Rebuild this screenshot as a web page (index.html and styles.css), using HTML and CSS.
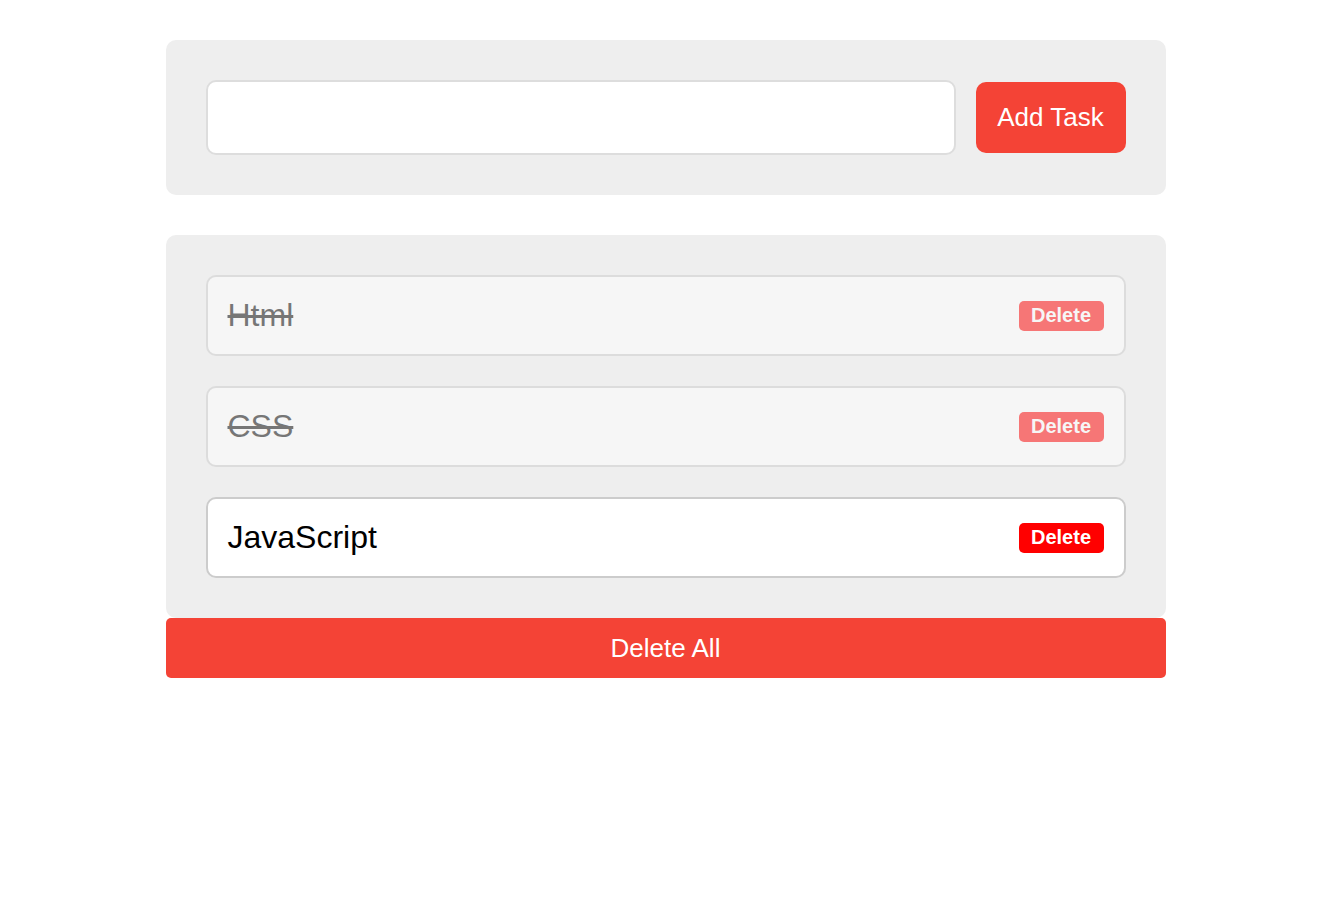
FILE: index.html
```html
<!DOCTYPE html>
<html>
<head>
<meta charset="utf-8">
<link rel="stylesheet" href="styles.css">
</head>
<body>
<div class="container">
  <div class="form card">
    <input class="task-input" type="text">
    <button class="add-btn">Add Task</button>
  </div>
  <div class="tasks card">
    <div class="task done"><span class="name">Html</span><button class="del">Delete</button></div>
    <div class="task done"><span class="name">CSS</span><button class="del">Delete</button></div>
    <div class="task"><span class="name">JavaScript</span><button class="del">Delete</button></div>
  </div>
  <button class="delete-all">Delete All</button>
</div>
</body>
</html>
```
FILE: styles.css
```css
* { box-sizing: border-box; }
body {
  margin: 0;
  background: #fff;
  font-family: "Liberation Sans", Arial, sans-serif;
}
.container {
  width: 1000px;
  margin: 40px auto 0;
}
.card {
  background: #eee;
  border-radius: 10px;
  padding: 40px;
}
.form {
  display: flex;
  align-items: center;
  gap: 20px;
  height: 155px;
}
.task-input {
  flex: 1;
  height: 75px;
  border: 2px solid #ddd;
  border-radius: 10px;
  background: #fff;
  outline: none;
  font-size: 26px;
  padding: 0 20px;
}
.add-btn {
  width: 150px;
  height: 71px;
  border: none;
  border-radius: 10px;
  background: #f44336;
  color: #fff;
  font-family: inherit;
  font-size: 26px;
  padding: 0;
}
.tasks {
  margin-top: 40px;
  display: flex;
  flex-direction: column;
  gap: 30px;
}
.task {
  height: 81px;
  background: #fff;
  border: 2px solid #ccc;
  border-radius: 10px;
  display: flex;
  align-items: center;
  justify-content: space-between;
  padding: 0 20px;
}
.task.done { opacity: 0.5; }
.task.done .name { text-decoration: line-through; }
.name {
  font-size: 32px;
  color: #000;
}
.del {
  height: 30px;
  width: 85px;
  padding: 0;
  border: none;
  border-radius: 5px;
  background: #f00;
  color: #fff;
  font-family: inherit;
  font-weight: bold;
  font-size: 20px;
}
.delete-all {
  display: block;
  width: 100%;
  height: 60px;
  border: none;
  border-radius: 5px;
  background: #f44336;
  color: #fff;
  font-family: inherit;
  font-size: 26px;
  padding: 0;
}
```
